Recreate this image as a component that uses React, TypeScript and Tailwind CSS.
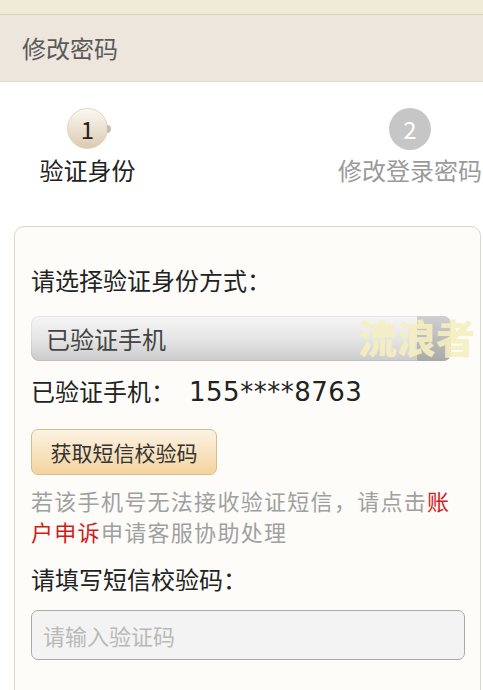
import React from "react";

export default function App() {
  const font = { fontFamily: '"Noto Sans CJK SC", "Noto Sans", sans-serif' };
  return (
    <div className="w-[483px] h-[690px] overflow-hidden bg-white" style={font}>
      <div className="h-[15px] bg-[#efebd6] border-b border-[#ddd3b8]" />
      <div className="h-[67px] bg-[#ede6dc] border-b border-[#e2d8c4] flex items-center pl-[22px]">
        <span className="text-[24px] leading-none text-[#5a5a5a]">修改密码</span>
      </div>
      <div className="flex justify-between pt-[26px] pl-[38px]">
        <div className="flex flex-col items-center w-[99px]">
          <div className="relative">
            <div className="w-[41px] h-[41px] rounded-full bg-gradient-to-b from-[#fbf8f3] to-[#dccab0] border border-[#e0d4c2] flex items-center justify-center text-[24px] leading-none text-[#222]">
              1
            </div>
            <div className="absolute right-[-3px] top-[17px] w-[4px] h-[8px] bg-[#bdbdbd] rounded-r-sm" />
          </div>
          <div className="mt-[4px] text-[24px] leading-[34px] text-[#222]">验证身份</div>
        </div>
        <div className="flex flex-col items-center w-[150px] mr-[-2px]">
          <div className="w-[42px] h-[42px] rounded-full bg-[#c6c6c6] flex items-center justify-center text-[24px] leading-none text-white">
            2
          </div>
          <div className="mt-[3px] text-[24px] leading-[34px] text-[#9a9a9a] whitespace-nowrap">修改登录密码</div>
        </div>
      </div>
      <div className="ml-[14px] mr-[2px] mt-[39px] h-[500px] rounded-[10px] border border-[#ddd5c6] bg-[#fdfcf9] pl-[16px] pr-[16px] pt-[36px]">
        <div className="text-[24px] leading-[34px] text-[#222]">请选择验证身份方式：</div>
        <div className="relative mt-[19px] w-[420px] h-[45px] rounded-[8px] bg-gradient-to-b from-[#f6f6f6] via-[#e6e6e6] to-[#cbcbcb] shadow-[inset_0_0_0_1px_rgba(0,0,0,0.06)] flex items-center pl-[15px] overflow-visible">
          <span className="text-[24px] leading-none text-[#444]">已验证手机</span>
          <div className="absolute right-0 top-0 h-full w-[34px] rounded-r-[8px] bg-gradient-to-b from-[#cfcfcf] to-[#a9a9a9]" />
          <span className="absolute left-[327px] top-[1px] text-[39px] leading-none font-black text-[#f6efc0] opacity-90 whitespace-nowrap">流浪者</span>
        </div>
        <div className="mt-[13px] h-[34px] text-[24px] leading-[34px] text-[#222] whitespace-nowrap">
          已验证手机：
          <span className="ml-[14px] text-[26px] tracking-[0.5px]" style={{ fontFamily: '"DejaVu Sans", sans-serif' }}>155****8763</span>
        </div>
        <div className="mt-[21px] w-[186px] h-[46px] rounded-[7px] border border-[#d6bd92] bg-gradient-to-b from-[#fdf3e3] to-[#f3d39e] flex items-center justify-center text-[21px] leading-none text-[#333]">
          获取短信校验码
        </div>
        <div className="mt-[10px] w-[430px] text-[22px] leading-[31px] text-[#a0a0a0] tracking-[1.3px]">
          若该手机号无法接收验证短信，请点击<span className="text-[#d01b1b]">账户申诉</span>申请客服协助处理
        </div>
        <div className="mt-[15px] text-[24px] leading-[34px] text-[#222]">请填写短信校验码：</div>
        <div className="mt-[14px] w-[434px] h-[50px] rounded-[7px] border border-[#a9a9a9] bg-[#f3f3f3] flex items-center pl-[11px]">
          <span className="text-[22px] leading-none text-[#b9b9b9]">请输入验证码</span>
        </div>
      </div>
    </div>
  );
}
